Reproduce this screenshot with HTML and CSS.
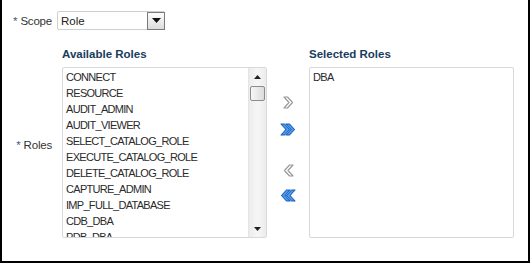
FILE: index.html
```html
<!DOCTYPE html>
<html>
<head>
<meta charset="utf-8">
<link rel="stylesheet" href="styles.css">
</head>
<body>
<div class="frame">
  <div class="form">
    <div class="lbl scope-lbl"><span class="req">*</span> Scope</div>
    <div class="select">
      <span class="sel-val">Role</span>
      <span class="sel-btn"><svg width="9" height="5" viewBox="0 0 9 5"><polygon points="0,0 9,0 4.5,5" fill="#111"/></svg></span>
    </div>
    <div class="lbl roles-lbl"><span class="req">*</span> Roles</div>
    <div class="shuttle">
      <div class="col">
        <div class="hdr">Available Roles</div>
        <div class="list">
          <div class="items">
            <div class="item">CONNECT</div>
            <div class="item">RESOURCE</div>
            <div class="item">AUDIT_ADMIN</div>
            <div class="item">AUDIT_VIEWER</div>
            <div class="item">SELECT_CATALOG_ROLE</div>
            <div class="item">EXECUTE_CATALOG_ROLE</div>
            <div class="item">DELETE_CATALOG_ROLE</div>
            <div class="item">CAPTURE_ADMIN</div>
            <div class="item">IMP_FULL_DATABASE</div>
            <div class="item">CDB_DBA</div>
            <div class="item">PDB_DBA</div>
          </div>
          <div class="sbar">
            <div class="sb-arrow"><svg width="7" height="4" viewBox="0 0 7 4"><polygon points="0,4 7,4 3.5,0" fill="#222"/></svg></div>
            <div class="sb-thumb"></div>
            <div class="sb-track"></div>
            <div class="sb-arrow"><svg width="7" height="4" viewBox="0 0 7 4"><polygon points="0,0 7,0 3.5,4" fill="#222"/></svg></div>
          </div>
        </div>
      </div>
      <div class="ops">
        <div class="op op1"><svg width="11" height="13" viewBox="0 0 11 13"><polygon points="1,1 4.5,1 9.5,6.5 4.5,12 1,12 6,6.5" fill="#fff" stroke="#9a9a9a" stroke-width="1.2" stroke-linejoin="round"/></svg></div>
        <div class="op op2"><svg width="16" height="13" viewBox="0 0 16 13"><polygon points="1,1 4.5,1 9.5,6.5 4.5,12 1,12 6,6.5" fill="#4a9ef0" stroke="#1d5fb8" stroke-width="1.1" stroke-linejoin="round"/><polygon points="6,1 9.5,1 14.5,6.5 9.5,12 6,12 11,6.5" fill="#4a9ef0" stroke="#1d5fb8" stroke-width="1.1" stroke-linejoin="round"/></svg></div>
        <div class="op op3"><svg width="11" height="13" viewBox="0 0 11 13"><polygon points="10,1 6.5,1 1.5,6.5 6.5,12 10,12 5,6.5" fill="#fff" stroke="#9a9a9a" stroke-width="1.2" stroke-linejoin="round"/></svg></div>
        <div class="op op4"><svg width="16" height="13" viewBox="0 0 16 13"><polygon points="15,1 11.5,1 6.5,6.5 11.5,12 15,12 10,6.5" fill="#4a9ef0" stroke="#1d5fb8" stroke-width="1.1" stroke-linejoin="round"/><polygon points="10,1 6.5,1 1.5,6.5 6.5,12 10,12 5,6.5" fill="#4a9ef0" stroke="#1d5fb8" stroke-width="1.1" stroke-linejoin="round"/></svg></div>
      </div>
      <div class="col">
        <div class="hdr">Selected Roles</div>
        <div class="list sel-list">
          <div class="items">
            <div class="item">DBA</div>
          </div>
        </div>
      </div>
    </div>
  </div>
</div>
</body>
</html>
```

FILE: styles.css
```css
html, body {
  margin: 0;
  padding: 0;
  background: #fff;
}
body {
  font-family: "Liberation Sans", Arial, sans-serif;
  font-size: 11px;
  color: #333;
}
.frame {
  box-sizing: border-box;
  width: 530px;
  height: 263px;
  border-left: 2px solid #000;
  border-right: 2px solid #000;
  border-bottom: 2px solid #000;
  padding-top: 11px;
}
.form {
  display: grid;
  grid-template-columns: 50px auto;
  column-gap: 5px;
  row-gap: 17px;
  align-items: center;
}
.lbl {
  text-align: right;
  color: #333;
  font-size: 11.5px;
  letter-spacing: -0.2px;
}
.req {
  color: #3b5f8a;
}
.roles-lbl {
  padding-top: 5px;
}
.select {
  box-sizing: border-box;
  width: 108px;
  height: 19px;
  border: 1px solid #cfcfcf;
  border-radius: 2px;
  display: flex;
  align-items: center;
  justify-content: space-between;
  padding-left: 3px;
}
.sel-val {
  font-size: 11.5px;
  color: #222;
}
.sel-btn {
  box-sizing: border-box;
  width: 18px;
  height: 18px;
  margin-right: -1px;
  border: 1px solid #7a7a7a;
  background: linear-gradient(#fdfdfd, #dcdcdc);
  display: flex;
  align-items: center;
  justify-content: center;
}
.shuttle {
  display: flex;
  margin-left: 5px;
}
.col {
  display: flex;
  flex-direction: column;
}
.hdr {
  font-weight: bold;
  font-size: 11.5px;
  color: #183c5c;
  line-height: 14px;
  height: 14px;
  margin-bottom: 6px;
}
.list {
  box-sizing: border-box;
  width: 205px;
  height: 171px;
  border: 1px solid #d3dadd;
  border-radius: 2px;
  display: flex;
  overflow: hidden;
}
.items {
  flex: 1;
  overflow: hidden;
  padding-left: 3px;
  padding-top: 1px;
}
.item {
  line-height: 16px;
  height: 16px;
  white-space: nowrap;
  letter-spacing: -0.7px;
  color: #2a2a2a;
}
.sbar {
  width: 17px;
  display: flex;
  flex-direction: column;
  border-left: 1px solid #e4e4e4;
  background: linear-gradient(to right, #ececec, #f6f6f6 50%, #ececec);
}
.sb-arrow {
  height: 17px;
  display: flex;
  align-items: center;
  justify-content: center;
}
.sb-thumb {
  box-sizing: border-box;
  height: 15px;
  margin: 1px 1px 0 1px;
  border: 1px solid #8c8c8c;
  border-radius: 2px;
  background: linear-gradient(to right, #f6f6f6, #dcdcdc);
}
.sb-track {
  flex: 1;
}
.ops {
  width: 42px;
  display: flex;
  flex-direction: column;
  align-items: center;
  padding-top: 49px;
}
.op {
  height: 13px;
  display: flex;
  justify-content: center;
}
.op2 { margin-top: 14px; }
.op3 { margin-top: 28px; }
.op4 { margin-top: 12px; }
```
